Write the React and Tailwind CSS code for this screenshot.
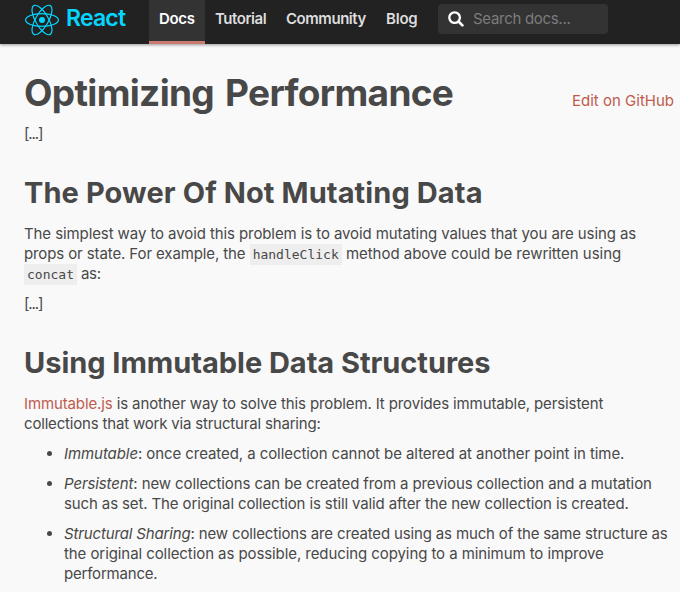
import React from "react";

function ReactLogo() {
  return (
    <svg width="34" height="32" viewBox="-17 -16 34 32" fill="none" stroke="#05d6ff" strokeWidth="1.2" className="mt-1 shrink-0">
      <ellipse rx="16.4" ry="6.4" />
      <ellipse rx="16.6" ry="6.4" transform="rotate(60)" />
      <ellipse rx="16.6" ry="6.4" transform="rotate(120)" />
      <circle r="3" fill="#05d6ff" stroke="none" />
    </svg>
  );
}

function SearchIcon() {
  return (
    <svg width="16" height="16" viewBox="0 0 16 16" fill="none" stroke="#fff" className="shrink-0">
      <circle cx="6.6" cy="6.6" r="5.3" strokeWidth="2.3" />
      <path d="M10.8 10.8 L14.4 14.4" strokeWidth="2.7" strokeLinecap="round" />
    </svg>
  );
}

function Code({ children }) {
  return (
    <code className="inline-block h-[21px] bg-[#eeeeee] px-[3px] align-top font-['DejaVu_Sans_Mono',monospace] text-[13px] leading-[21px] tracking-normal">
      {children}
    </code>
  );
}

function Line({ className = "", children }) {
  return <span className={`block h-5 whitespace-nowrap ${className}`}>{children}</span>;
}

function Item({ children }) {
  return (
    <li className="flex">
      <span className="mt-[7px] mr-[12px] ml-[23px] size-[5px] shrink-0 rounded-full bg-[#484848]" />
      <div>{children}</div>
    </li>
  );
}

export default function App() {
  return (
    <div className="h-[592px] w-[680px] overflow-hidden bg-[#f9f9f9] font-['Inter',sans-serif] text-[15px] leading-5 text-[#484848]">
      <header className="flex h-11 items-start bg-[#222222] shadow-[0_1px_3px_rgba(0,0,0,0.4)]">
        <a className="flex h-11 w-[149px] pl-[25px] text-[#05d6ff]">
          <ReactLogo />
          <span className="ml-[7px] text-[23px] leading-[37px] font-semibold tracking-[-0.8px]">React</span>
        </a>
        <nav className="flex text-[15px] leading-[38px] font-semibold text-[#dddddd]">
          <a className="h-11 w-14 border-b-[3px] border-[#cc7a6f] bg-[#333333] pl-[10px] tracking-[-0.3px] text-white">Docs</a>
          <a className="w-[71px] pl-[10px] tracking-[-0.45px]">Tutorial</a>
          <a className="w-[100px] pl-[10px] tracking-[-0.45px]">Community</a>
          <a className="w-[62px] pl-[10px] tracking-[-0.2px]">Blog</a>
        </nav>
        <div className="mt-1 flex h-[30px] w-[170px] items-center rounded bg-[#333333] pl-[10px]">
          <SearchIcon />
          <span className="ml-[9px] text-[15px] tracking-[-0.3px] text-[#7c7c7c]">Search docs...</span>
        </div>
      </header>

      <main className="pl-6">
        <div className="flex h-20 items-start justify-between pr-[6px]">
          <h1 className="pt-6 text-[37px] leading-[50px] font-bold tracking-[-0.68px] whitespace-nowrap [word-spacing:3px]">Optimizing Performance</h1>
          <a className="pt-[47px] text-[#c05b4d]">Edit on GitHub</a>
        </div>
        <p><Line className="tracking-[-1.1px]">[...]</Line></p>
        <h2 className="mt-[29px] h-[51px] text-[29px] leading-10 font-bold tracking-[0.1px] whitespace-nowrap">The Power Of Not Mutating Data</h2>
        <p>
          <Line className="tracking-[-0.092px]">The simplest way to avoid this problem is to avoid mutating values that you are using as</Line>
          <Line className="tracking-[-0.11px]">props or state. For example, the <Code>handleClick</Code><span className="tracking-[-0.03px]"> method above could be rewritten using</span></Line>
          <Line className="tracking-[-0.3px]"><Code>concat</Code> as:</Line>
        </p>
        <p className="mt-[10px]"><Line className="tracking-[-1.1px]">[...]</Line></p>
        <h2 className="mt-[29px] h-[51px] text-[29px] leading-10 font-bold tracking-[-0.04px] whitespace-nowrap">Using Immutable Data Structures</h2>
        <p>
          <Line className="tracking-[-0.12px]"><a className="text-[#c05b4d]">Immutable.js</a> is another way to solve this problem. It provides immutable, persistent</Line>
          <Line className="tracking-[-0.18px]">collections that work via structural sharing:</Line>
        </p>
        <ul className="mt-[10px] flex flex-col gap-[10px]">
          <Item>
            <Line className="tracking-[-0.075px]"><em>Immutable</em>: once created, a collection cannot be altered at another point in time.</Line>
          </Item>
          <Item>
            <Line className="tracking-[-0.11px]"><em>Persistent</em>: new collections can be created from a previous collection and a mutation</Line>
            <Line className="tracking-[-0.12px]">such as set. The original collection is still valid after the new collection is created.</Line>
          </Item>
          <Item>
            <Line className="tracking-[-0.15px]"><em>Structural Sharing</em>: new collections are created using as much of the same structure as</Line>
            <Line className="tracking-[-0.08px]">the original collection as possible, reducing copying to a minimum to improve</Line>
            <Line className="tracking-[-0.2px]">performance.</Line>
          </Item>
        </ul>
      </main>
    </div>
  );
}
